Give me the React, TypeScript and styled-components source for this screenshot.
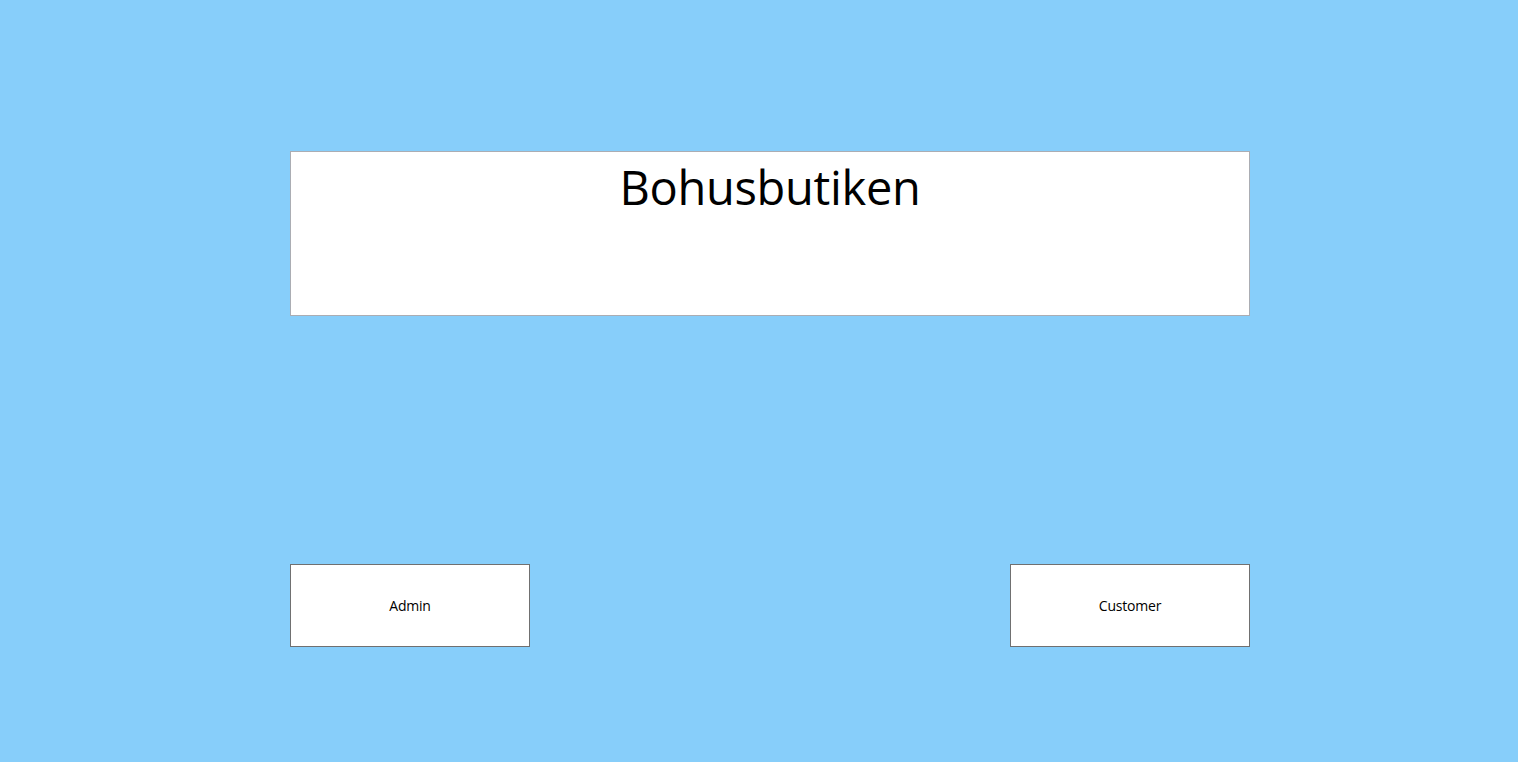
import React from "react";
import styled, { createGlobalStyle } from "styled-components";

const Global = createGlobalStyle`
  html, body { margin: 0; padding: 0; }
  body {
    background: #87cefa;
    font-family: "Open Sans", "Noto Sans", sans-serif;
    color: #000;
  }
`;

const Page = styled.div`
  width: 1518px;
  height: 762px;
  box-sizing: border-box;
  padding: 151px 0 0 290px;
  background: #87cefa;
`;

const Column = styled.div`
  width: 960px;
  display: flex;
  flex-direction: column;
  gap: 248px;
`;

const TitleBox = styled.div`
  height: 165px;
  box-sizing: border-box;
  border: 1px solid #abadb3;
  background: #fff;
  display: flex;
  justify-content: center;
  align-items: flex-start;
  padding-top: 3px;
`;

const Title = styled.h1`
  margin: 0;
  font-weight: 400;
  font-size: 47px;
  line-height: 64px;
  letter-spacing: -0.3px;
`;

const ButtonRow = styled.div`
  display: flex;
  justify-content: space-between;
`;

const Button = styled.button`
  width: 240px;
  height: 83px;
  box-sizing: border-box;
  border: 1px solid #707070;
  background: #fff;
  font-family: "Open Sans", "Noto Sans", sans-serif;
  font-size: 14px;
  letter-spacing: -0.2px;
  color: #000;
  padding: 0;
  display: flex;
  align-items: center;
  justify-content: center;
  cursor: pointer;
`;

export default function App() {
  return (
    <>
      <Global />
      <Page>
        <Column>
          <TitleBox>
            <Title>Bohusbutiken</Title>
          </TitleBox>
          <ButtonRow>
            <Button>Admin</Button>
            <Button>Customer</Button>
          </ButtonRow>
        </Column>
      </Page>
    </>
  );
}
